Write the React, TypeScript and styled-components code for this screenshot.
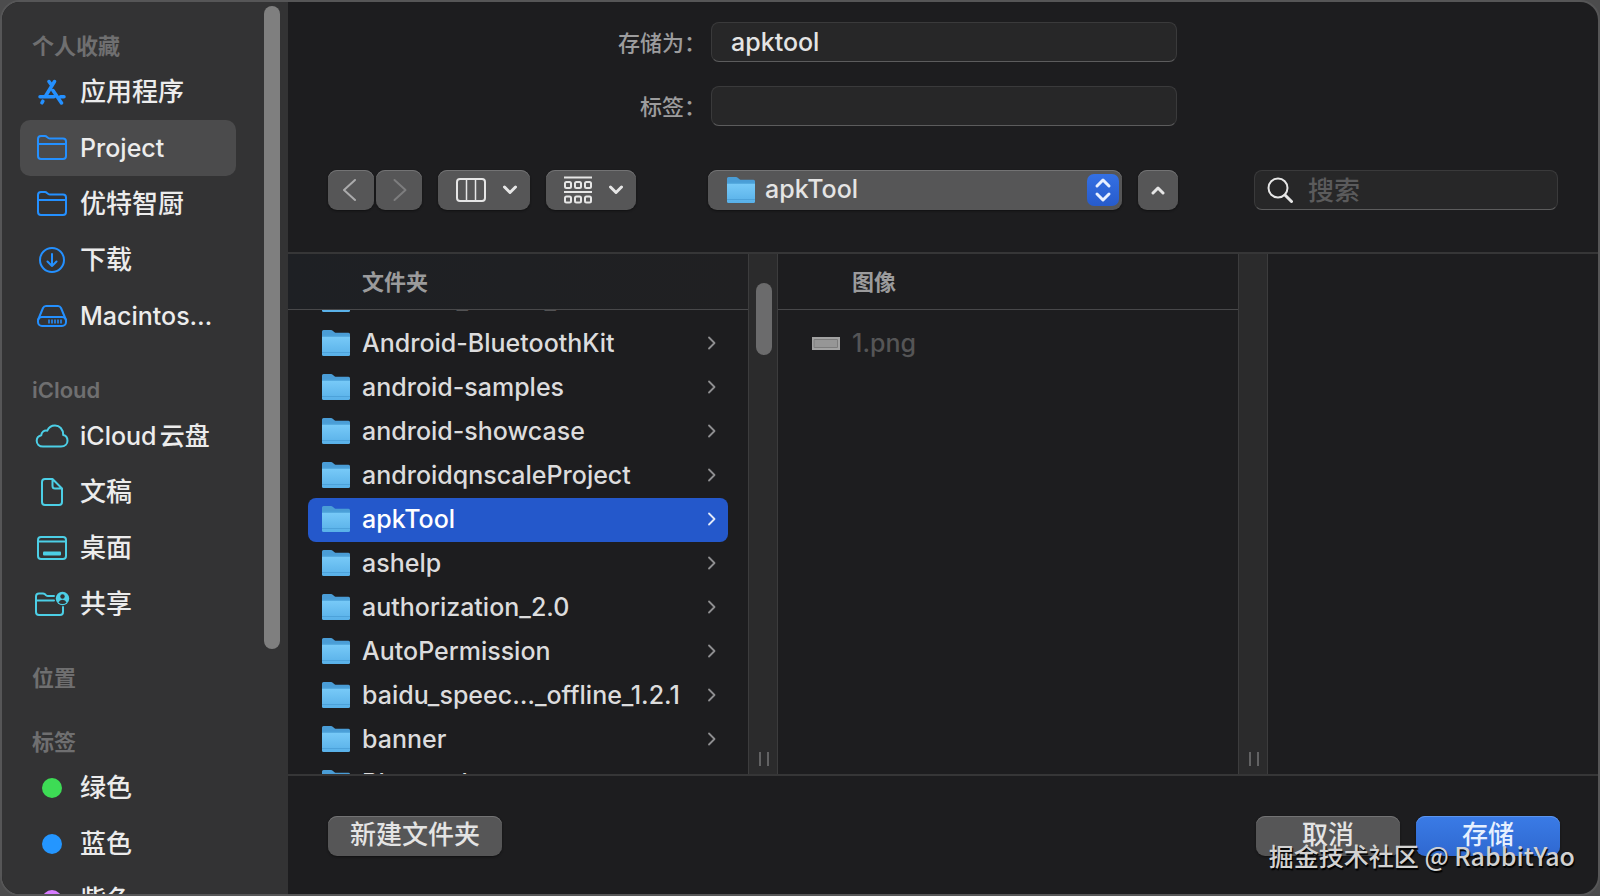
import React from 'react';
import styled, { createGlobalStyle, css } from 'styled-components';

const GlobalStyle = createGlobalStyle`
  *, *::before, *::after { box-sizing: border-box; }
  html, body, #root { height: 100%; }
  body {
    margin: 0;
    background: #4c4c4d;
    color: #e4e4e4;
    font-family: Inter, "Noto Sans CJK SC", sans-serif;
    font-size: 25px;
    font-weight: 500;
    line-height: 32px;
    overflow: hidden;
  }
  button, input, select { font: inherit; color: inherit; margin: 0; }
  button { cursor: pointer; }
  svg { display: block; flex: none; }
`;

const BLUE = '#2490ff';
const CYAN = '#4ccfe6';

const Dialog = styled.main`
  position: relative;
  display: flex;
  height: 100vh;
  border: 2px solid #565657;
  border-radius: 20px;
  background: #1d1d1f;
  overflow: hidden;
`;

const Sidebar = styled.aside`
  flex: none;
  display: flex;
  width: 286px;
  padding: 4px 8px 0 0;
  background: #333334;
  overflow: hidden;
`;

const SidebarLists = styled.nav`
  flex: 1;
  display: flex;
  flex-direction: column;
  gap: 26px;
  min-width: 0;
  padding: 20px 28px 0 18px;
`;

const SidebarThumb = styled.div`
  flex: none;
  width: 16px;
  height: 643px;
  border-radius: 8px;
  background: #7f7f7f;
`;

const SectionTitle = styled.h2`
  margin: 0;
  padding: 2px 0 0 12px;
  font-size: 22px;
  line-height: 36px;
  font-weight: 600;
  color: #6f6f70;
`;

const SectionItems = styled.ul`
  margin: 0;
  padding: 0;
  list-style: none;
`;

const Place = styled.a<{ $active?: boolean }>`
  display: flex;
  align-items: center;
  height: 56px;
  padding-left: 13px;
  gap: 9px;
  border-radius: 10px;
  color: #ececec;
  text-decoration: none;
  white-space: nowrap;
  background: ${(p) => (p.$active ? '#4b4b4c' : 'transparent')};
`;

const PlaceIcon = styled.span`
  display: flex;
  justify-content: center;
  width: 38px;
`;

const PlaceName = styled.span<{ $latin?: boolean }>`
  font-size: ${(p) => (p.$latin ? '25px' : '26px')};
  text-autospace: normal;
`;

const TagDot = styled.span<{ $color: string }>`
  width: 20px;
  height: 20px;
  border-radius: 50%;
  background: ${(p) => p.$color};
`;

const Content = styled.section`
  flex: 1;
  display: flex;
  flex-direction: column;
  min-width: 0;
`;

const NameForm = styled.div`
  display: grid;
  grid-template-columns: 1fr 466px 1fr;
  row-gap: 24px;
  padding: 20px 0 0 2px;
`;

const FieldLabel = styled.label`
  padding-right: 5px;
  font-size: 22px;
  line-height: 42px;
  height: 40px;
  text-align: right;
  color: #9c9c9d;
`;

const fieldLook = css`
  height: 40px;
  border: 1px solid #3a3a3b;
  border-bottom-color: #5c5c5d;
  border-radius: 8px;
  background: #272728;
`;

const Field = styled.input`
  ${fieldLook}
  grid-column: 2;
  width: 100%;
  padding: 0 19px;
  outline: none;
`;

const Toolbar = styled.div`
  display: grid;
  grid-template-columns: 1fr 470px 1fr;
  align-items: center;
  padding: 44px 40px 42px;
`;

const ToolGroup = styled.div<{ $gap: number; $end?: boolean }>`
  display: flex;
  gap: ${(p) => p.$gap}px;
  justify-content: ${(p) => (p.$end ? 'flex-end' : 'flex-start')};
`;

const Button = styled.button<{ $width: number; $primary?: boolean }>`
  display: flex;
  align-items: center;
  justify-content: center;
  width: ${(p) => p.$width}px;
  height: 40px;
  padding: 0 0 2px;
  border: 0;
  border-radius: 9px;
  font-size: 26px;
  color: ${(p) => (p.$primary ? '#e6f0ff' : '#e4e4e4')};
  background: ${(p) => (p.$primary ? 'linear-gradient(#3a7be6, #2f68d0)' : '#565657')};
  box-shadow: inset 0 1px 0 ${(p) => (p.$primary ? '#5c95ee' : '#737374')}, 0 1px 2px #111112;
`;

const IconButton = styled(Button)`
  padding: 0;
`;

const MenuButton = styled(Button)`
  gap: 16px;
  padding: 0 0 0 6px;
`;

const Popup = styled.label`
  flex: 1;
  display: flex;
  align-items: center;
  gap: 10px;
  height: 40px;
  padding: 0 3px 0 19px;
  border-radius: 9px;
  background: #565657;
  box-shadow: inset 0 1px 0 #737374, 0 1px 2px #111112;
`;

const PopupSelect = styled.select`
  flex: 1;
  min-width: 0;
  height: 36px;
  padding: 0 0 2px;
  border: 0;
  outline: none;
  appearance: none;
  background: transparent;
`;

const Stepper = styled.span`
  display: flex;
  align-items: center;
  justify-content: center;
  width: 32px;
  height: 32px;
  border-radius: 7px;
  background: linear-gradient(#3470e4, #275bcb);
`;

const SearchBox = styled.label`
  ${fieldLook}
  display: flex;
  align-items: center;
  gap: 15px;
  width: 304px;
  padding: 0 12px;
`;

const SearchInput = styled.input`
  flex: 1;
  min-width: 0;
  height: 36px;
  padding: 0;
  border: 0;
  outline: none;
  font-size: 26px;
  background: transparent;
  &::placeholder { color: #5b5b5c; opacity: 1; }
`;

const Browser = styled.div`
  flex: 1;
  display: flex;
  min-height: 0;
  border-top: 2px solid #363637;
  border-bottom: 2px solid #363637;
`;

const Column = styled.section<{ $grow?: boolean }>`
  flex: ${(p) => (p.$grow ? '1' : '0 0 460px')};
  display: flex;
  flex-direction: column;
  min-width: 0;
  overflow: hidden;
`;

const ColumnTitle = styled.h3<{ $tinted?: boolean }>`
  flex: none;
  margin: 0;
  height: 56px;
  padding-left: 74px;
  border-bottom: 1px solid #48484a;
  font-size: 22px;
  line-height: 56px;
  font-weight: 700;
  color: #9b9b9c;
  background: ${(p) => (p.$tinted ? 'linear-gradient(90deg, #1e2024, #202022)' : 'transparent')};
`;

const ListView = styled.div`
  flex: 1;
  min-height: 0;
  overflow: hidden;
`;

const Files = styled.ul<{ $scrolled?: number }>`
  margin: ${(p) => (p.$scrolled ? -p.$scrolled : 12)}px 0 0;
  padding: 0 20px;
  list-style: none;
`;

const FileRow = styled.li<{ $selected?: boolean; $dim?: boolean }>`
  display: flex;
  align-items: center;
  gap: 12px;
  height: 44px;
  padding: 0 11px 2px 14px;
  border-radius: 8px;
  color: ${(p) => (p.$selected ? '#ffffff' : p.$dim ? '#555556' : '#dcdcdd')};
  background: ${(p) => (p.$selected ? '#2458cb' : 'transparent')};
  --arrow: ${(p) => (p.$selected ? '#e2e9f8' : '#8e8e90')};
`;

const FileName = styled.span`
  flex: 1;
  height: 32px;
  white-space: nowrap;
`;

const Divider = styled.div`
  flex: none;
  display: flex;
  flex-direction: column;
  align-items: center;
  justify-content: space-between;
  width: 30px;
  padding: 29px 0 8px 2px;
  border: solid #3c3c3d;
  border-width: 0 1px;
  background: #2b2b2c;
`;

const Thumb = styled.div<{ $shown?: boolean }>`
  width: 16px;
  height: 72px;
  border-radius: 8px;
  background: ${(p) => (p.$shown ? '#6b6b6c' : 'transparent')};
`;

const Grip = styled.div`
  width: 10px;
  height: 14px;
  border: solid #626263;
  border-width: 0 2px;
`;

const Footer = styled.footer`
  display: flex;
  justify-content: space-between;
  padding: 40px 38px 38px 40px;
`;

const Watermark = styled.p`
  position: absolute;
  right: 23px;
  bottom: 23px;
  margin: 0;
  font-family: "Noto Sans CJK SC", sans-serif;
  line-height: 32px;
  color: #d2d2d2;
  text-shadow: 1px 2px 1px #000;
  pointer-events: none;
`;

const Visual = styled.svg.attrs({ fill: 'none', strokeLinecap: 'round', strokeLinejoin: 'round', 'aria-hidden': true })``;

const FolderOutline = () => (
  <Visual width="32" height="28" viewBox="0 0 32 28" stroke={BLUE} strokeWidth="2">
    <path d="M2 10V5q0-3 3-3h4q1 0 2 1l1 .8q1 .7 2 .7h13q3 0 3 3V22q0 3-3 3H5q-3 0-3-3zM2 10h28" />
  </Visual>
);

const AppsIcon = () => (
  <Visual width="28" height="26" viewBox="0 0 28 26" stroke={BLUE} strokeWidth="3.500">
    <path d="M11 2.500L13.800 6.500M16.500 2.500L7.300 17.500M15 11.500L23.500 24M2 17.800H16M22.500 17.800H26M4.800 22.200L4 23.800" />
  </Visual>
);

const DownloadIcon = () => (
  <Visual width="28" height="28" viewBox="0 0 28 28" stroke={BLUE} strokeWidth="2">
    <circle cx="14" cy="14" r="12" />
    <path d="M14 8v12M9.500 15.500L14 20l4.500-4.500" />
  </Visual>
);

const DiskIcon = () => (
  <Visual width="32" height="24" viewBox="0 0 32 24" stroke={BLUE} strokeWidth="2">
    <path d="M2 16L7 4q1-2 3-2h12q2 0 3 2l5 12" />
    <rect x="2" y="13" width="28" height="9" rx="4" />
    <path d="M13 15.500v4M16 15.500v4M19 15.500v4M22 15.500v4M25 15.500v4" strokeWidth="1.500" strokeLinecap="butt" />
  </Visual>
);

const CloudIcon = () => (
  <Visual width="34" height="26" viewBox="0 0 34 26" stroke={CYAN} strokeWidth="2">
    <path d="M8 23.500h18c4 0 6.500-2.500 6.500-5.800 0-3-2-5.200-4.300-5.700C28.200 6 24.500 2.500 20 2.500c-3.600 0-6.400 2-7.700 5.200-3.200-.7-5.900 1.300-6 4.600C3.500 13 1.700 15 1.700 17.800c0 3.300 2.600 5.700 6.300 5.700z" />
  </Visual>
);

const DocIcon = () => (
  <Visual width="24" height="30" viewBox="0 0 24 30" stroke={CYAN} strokeWidth="2">
    <path d="M5 2h7.500L22 11.500V25q0 3-3 3H5q-3 0-3-3V5q0-3 3-3zM12.500 2v7q0 2.500 2.500 2.500h7" />
  </Visual>
);

const DesktopIcon = () => (
  <Visual width="32" height="26" viewBox="0 0 32 26" stroke={CYAN} strokeWidth="2">
    <rect x="2" y="2" width="28" height="22" rx="3" />
    <path d="M2 6.500h28" />
    <rect x="7" y="16.500" width="18" height="4" fill={CYAN} stroke="none" rx="1" />
  </Visual>
);

const SharedIcon = () => (
  <Visual width="36" height="26" viewBox="0 0 36 26" stroke={CYAN} strokeWidth="2">
    <path d="M20 5h-6q-1 0-2-.8l-1-.9q-1-.8-2-.8H5q-3 0-3 3V21q0 3 3 3h21q3 0 3-3v-5M2 9.500h18" />
    <circle cx="28.500" cy="7.500" r="6.700" fill={CYAN} stroke="none" />
    <circle cx="28.500" cy="5.500" r="2.200" fill="#333334" stroke="none" />
    <path d="M24.500 11.500q1-2.700 4-2.700t4 2.700q-1.700 1.500-4 1.500t-4-1.500z" fill="#333334" stroke="none" />
  </Visual>
);

const FolderIcon = () => (
  <Visual width="28" height="28" viewBox="0 0 28 28">
    <defs>
      <linearGradient id="folderFront" x1="0" y1="0" x2="0" y2="1">
        <stop offset="0" stopColor="#78caf8" />
        <stop offset="1" stopColor="#58b0e8" />
      </linearGradient>
    </defs>
    <path d="M0 2.500Q0 1 1.500 1H9q1 0 2 1l1.500 1.200q.8.600 1.800.6H26.500Q28 3.800 28 5.300V12H0z" fill="#4a9dd6" />
    <path d="M0 7.500H28V25.500q0 1.500-1.500 1.500H1.500Q0 27 0 25.500z" fill="url(#folderFront)" />
    <path d="M0 7h28M0 23.500h28" stroke="#4da2da" strokeWidth="1" strokeLinecap="butt" />
  </Visual>
);

const ImageThumb = () => (
  <Visual width="28" height="13" viewBox="0 0 28 13">
    <rect width="28" height="13" fill="#a2a2a2" />
    <rect x="2.500" y="2.500" width="23" height="8" fill="#969696" stroke="#7c7c7c" />
  </Visual>
);

const RowArrow = () => (
  <Visual width="10" height="14" viewBox="0 0 10 14" stroke="var(--arrow)" strokeWidth="1.800">
    <path d="M2 1.500L7.500 7 2 12.500" />
  </Visual>
);

const HistoryArrow = ({ forward }: { forward?: boolean }) => (
  <Visual width="16" height="24" viewBox="0 0 16 24" stroke={forward ? '#7d7d7e' : '#ababac'} strokeWidth="2">
    <path d={forward ? 'M3.500 2L14.500 12l-11 10' : 'M12 2L1 12l11 10'} />
  </Visual>
);

const Chevron = ({ up }: { up?: boolean }) => (
  <Visual width="16" height="10" viewBox="0 0 16 10" stroke="#e6e6e6" strokeWidth="3">
    <path d={up ? 'M3 8L8 3l5 5' : 'M2.500 2L8 7.500 13.500 2'} />
  </Visual>
);

const ColumnsIcon = () => (
  <Visual width="30" height="24" viewBox="0 0 30 24" stroke="#e6e6e6" strokeWidth="2">
    <rect x="1" y="1" width="28" height="22" rx="3" />
    <path d="M10.500 1v22M19.500 1v22" strokeWidth="1.500" />
  </Visual>
);

const GroupIcon = () => (
  <Visual width="28" height="28" viewBox="0 0 28 28" stroke="#e6e6e6" strokeWidth="2">
    <path d="M0 1.500h28M0 16h28" strokeLinecap="butt" />
    {[6, 20.5].map((y) => [1, 11, 21].map((x) => <rect key={`${x}-${y}`} x={x} y={y} width="6" height="6" rx="1.500" />))}
  </Visual>
);

const StepperArrows = () => (
  <Visual width="18" height="26" viewBox="0 0 18 26" stroke="#e8f0ff" strokeWidth="3">
    <path d="M3 9l6-6 6 6M3 17l6 6 6-6" />
  </Visual>
);

const SearchIcon = () => (
  <Visual width="26" height="26" viewBox="0 0 26 26" stroke="#e6e6e6" strokeWidth="2">
    <circle cx="11" cy="11" r="9.500" />
    <path d="M18 18l6.500 6.500" strokeWidth="3" />
  </Visual>
);

type PlaceEntry = { name: string; icon: React.ReactNode; active?: boolean; latin?: boolean };

const sections: { title: string; items: PlaceEntry[] }[] = [
  {
    title: '个人收藏',
    items: [
      { name: '应用程序', icon: <AppsIcon /> },
      { name: 'Project', icon: <FolderOutline />, active: true, latin: true },
      { name: '优特智厨', icon: <FolderOutline /> },
      { name: '下载', icon: <DownloadIcon /> },
      { name: 'Macintos…', icon: <DiskIcon />, latin: true },
    ],
  },
  {
    title: 'iCloud',
    items: [
      { name: 'iCloud云盘', icon: <CloudIcon />, latin: true },
      { name: '文稿', icon: <DocIcon /> },
      { name: '桌面', icon: <DesktopIcon /> },
      { name: '共享', icon: <SharedIcon /> },
    ],
  },
  { title: '位置', items: [] },
  {
    title: '标签',
    items: [
      { name: '绿色', icon: <TagDot $color="#3ddc55" /> },
      { name: '蓝色', icon: <TagDot $color="#2496ff" /> },
      { name: '紫色', icon: <TagDot $color="#d77bff" /> },
    ],
  },
];

const folders = [
  'Android_Studio_Demo',
  'Android-BluetoothKit',
  'android-samples',
  'android-showcase',
  'androidqnscaleProject',
  'apkTool',
  'ashelp',
  'authorization_2.0',
  'AutoPermission',
  'baidu_speec…_offline_1.2.1',
  'banner',
  'Bluetooth',
];

export default function App() {
  return (
    <>
      <GlobalStyle />
      <Dialog>
        <Sidebar>
          <SidebarLists>
            {sections.map((section) => (
              <section key={section.title}>
                <SectionTitle>{section.title}</SectionTitle>
                {section.items.length > 0 && (
                  <SectionItems>
                    {section.items.map((item) => (
                      <li key={item.name}>
                        <Place href="#" $active={item.active}>
                          <PlaceIcon>{item.icon}</PlaceIcon>
                          <PlaceName $latin={item.latin}>{item.name}</PlaceName>
                        </Place>
                      </li>
                    ))}
                  </SectionItems>
                )}
              </section>
            ))}
          </SidebarLists>
          <SidebarThumb />
        </Sidebar>

        <Content>
          <NameForm>
            <FieldLabel htmlFor="file-name">存储为：</FieldLabel>
            <Field id="file-name" defaultValue="apktool" />
            <span />
            <FieldLabel htmlFor="file-tags">标签：</FieldLabel>
            <Field id="file-tags" />
          </NameForm>

          <Toolbar>
            <ToolGroup $gap={16}>
              <ToolGroup $gap={2}>
                <IconButton $width={46} aria-label="后退"><HistoryArrow /></IconButton>
                <IconButton $width={46} aria-label="前进"><HistoryArrow forward /></IconButton>
              </ToolGroup>
              <MenuButton $width={92} aria-label="显示方式"><ColumnsIcon /><Chevron /></MenuButton>
              <MenuButton $width={90} aria-label="分组方式"><GroupIcon /><Chevron /></MenuButton>
            </ToolGroup>
            <ToolGroup $gap={16}>
              <Popup>
                <FolderIcon />
                <PopupSelect aria-label="位置" defaultValue="apkTool">
                  <option>apkTool</option>
                </PopupSelect>
                <Stepper><StepperArrows /></Stepper>
              </Popup>
              <IconButton $width={40} aria-label="收起"><Chevron up /></IconButton>
            </ToolGroup>
            <ToolGroup $gap={0} $end>
              <SearchBox>
                <SearchIcon />
                <SearchInput type="text" placeholder="搜索" aria-label="搜索" />
              </SearchBox>
            </ToolGroup>
          </Toolbar>

          <Browser>
            <Column>
              <ColumnTitle $tinted>文件夹</ColumnTitle>
              <ListView>
                <Files $scrolled={32}>
                  {folders.map((name) => (
                    <FileRow key={name} $selected={name === 'apkTool'}>
                      <FolderIcon />
                      <FileName>{name}</FileName>
                      <RowArrow />
                    </FileRow>
                  ))}
                </Files>
              </ListView>
            </Column>
            <Divider><Thumb $shown /><Grip /></Divider>
            <Column>
              <ColumnTitle>图像</ColumnTitle>
              <ListView>
                <Files>
                  <FileRow $dim>
                    <ImageThumb />
                    <FileName>1.png</FileName>
                  </FileRow>
                </Files>
              </ListView>
            </Column>
            <Divider><Thumb /><Grip /></Divider>
            <Column $grow />
          </Browser>

          <Footer>
            <Button $width={174}>新建文件夹</Button>
            <ToolGroup $gap={16}>
              <Button $width={144}>取消</Button>
              <Button $width={144} $primary>存储</Button>
            </ToolGroup>
          </Footer>
        </Content>
        <Watermark>掘金技术社区 @ RabbitYao</Watermark>
      </Dialog>
    </>
  );
}
